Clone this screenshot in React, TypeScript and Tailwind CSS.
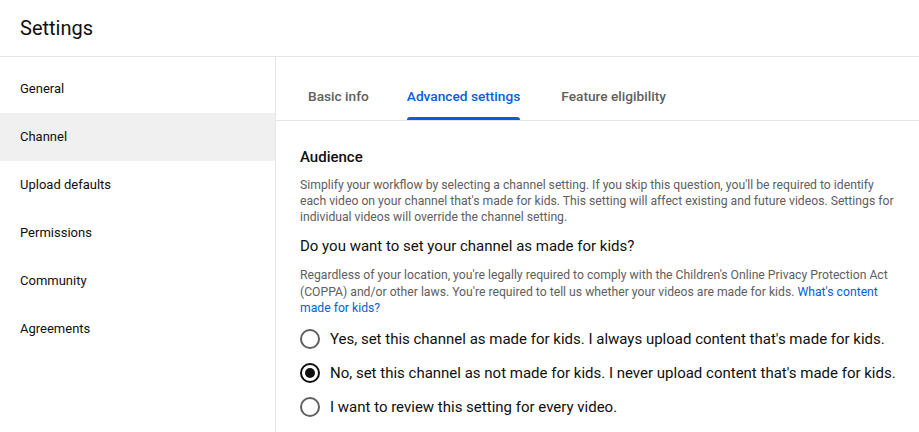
import React from "react";

const navItems = ["General", "Channel", "Upload defaults", "Permissions", "Community", "Agreements"];

const tabs = [
  { label: "Basic info", space: "" },
  { label: "Advanced settings", space: "ml-[38px]" },
  { label: "Feature eligibility", space: "ml-[41px]" },
];

const options = [
  { label: "Yes, set this channel as made for kids. I always upload content that's made for kids.", checked: false },
  { label: "No, set this channel as not made for kids. I never upload content that's made for kids.", checked: true },
  { label: "I want to review this setting for every video.", checked: false },
];

const Radio: React.FC<{ checked: boolean }> = ({ checked }) => (
  <span
    className={
      checked
        ? "w-5 h-5 rounded-full border-2 border-[#0f0f0f] flex items-center justify-center shrink-0"
        : "w-5 h-5 rounded-full border-2 border-[#606060] flex items-center justify-center shrink-0"
    }
  >
    {checked && <span className="w-[10px] h-[10px] rounded-full bg-[#0f0f0f]" />}
  </span>
);

export default function App() {
  return (
    <div className="h-screen flex flex-col bg-white text-[#0f0f0f] font-['Roboto','Liberation_Sans',sans-serif]">
      <header className="h-[57px] shrink-0 border-b border-[#e5e5e5] flex items-center px-5">
        <h1 className="text-[20px] leading-7 font-normal">Settings</h1>
      </header>

      <div className="flex flex-1 min-h-0">
        <nav className="w-[276px] shrink-0 border-r border-[#e5e5e5] pt-2">
          {navItems.map((item) => (
            <div
              key={item}
              className={
                item === "Channel"
                  ? "h-12 flex items-center px-5 text-[13px] bg-[#f0f0f0]"
                  : "h-12 flex items-center px-5 text-[13px]"
              }
            >
              {item}
            </div>
          ))}
        </nav>

        <main className="flex-1 min-w-0">
          <div className="h-16 border-b border-[#e5e5e5] flex items-end pl-8">
            {tabs.map((tab) => {
              const active = tab.label === "Advanced settings";
              return (
                <div key={tab.label} className={"flex flex-col " + tab.space}>
                  <span
                    className={
                      active
                        ? "text-[13.7px] leading-6 font-medium pb-[9px] text-[#065fd4]"
                        : "text-[13.7px] leading-6 font-medium pb-[9px] text-[#606060]"
                    }
                  >
                    {tab.label}
                  </span>
                  <div className={active ? "h-[3px] rounded-t-sm bg-[#065fd4]" : "h-[3px]"} />
                </div>
              );
            })}
          </div>

          <section className="pl-6 pr-4 pt-6">
            <h2 className="text-[15px] leading-6 font-medium">Audience</h2>
            <p className="mt-[8px] max-w-[600px] text-[12.2px] leading-4 text-[#606060]">
              Simplify your workflow by selecting a channel setting. If you skip this question, you'll be required to identify each
              video on your channel that's made for kids. This setting will affect existing and future videos. Settings for
              individual videos will override the channel setting.
            </p>

            <h3 className="mt-[9px] text-[15px] leading-6 font-normal">Do you want to set your channel as made for kids?</h3>
            <p className="mt-[9px] max-w-[600px] text-[12.2px] leading-[16.5px] text-[#606060]">
              Regardless of your location, you're legally required to comply with the Children's Online Privacy Protection Act
              (COPPA) and/or other laws. You're required to tell us whether your videos are made for kids.{" "}
              <a className="text-[#065fd4]">What's content made for kids?</a>
            </p>

            <div className="mt-[5px] flex flex-col">
              {options.map((o) => (
                <label key={o.label} className="h-[34px] flex items-center gap-[10px]">
                  <Radio checked={o.checked} />
                  <span className="text-[15px] leading-6">{o.label}</span>
                </label>
              ))}
            </div>
          </section>
        </main>
      </div>
    </div>
  );
}
